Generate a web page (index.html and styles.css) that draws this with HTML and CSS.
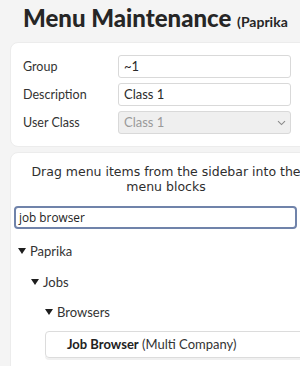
FILE: index.html
```html
<!DOCTYPE html>
<html>
<head>
<meta charset="utf-8">
<link rel="stylesheet" href="styles.css">
</head>
<body>
<div class="page">
  <h1 class="title">Menu Maintenance <span class="sub">(Paprika</span></h1>
  <div class="card form-card">
    <div class="row">
      <label class="lbl">Group</label>
      <div class="field">~1</div>
    </div>
    <div class="row">
      <label class="lbl">Description</label>
      <div class="field">Class 1</div>
    </div>
    <div class="row">
      <label class="lbl">User Class</label>
      <div class="field disabled">Class 1
        <svg class="chev" width="9" height="6" viewBox="0 0 9 6"><path d="M1 1.2 L4.5 4.6 L8 1.2" fill="none" stroke="#8a8a8a" stroke-width="1.1"/></svg>
      </div>
    </div>
  </div>
  <div class="card tree-card">
    <p class="hint">Drag menu items from the sidebar into the menu blocks</p>
    <div class="search">job browser</div>
    <ul class="tree">
      <li class="node lvl0"><span class="tri"></span>Paprika</li>
      <li class="node lvl1"><span class="tri"></span>Jobs</li>
      <li class="node lvl2"><span class="tri"></span>Browsers</li>
    </ul>
    <div class="item"><b>Job Browser</b> (Multi Company)</div>
  </div>
</div>
</body>
</html>
```
FILE: styles.css
```css
html, body {
  margin: 0;
  padding: 0;
  background: #f4f4f4;
  overflow: hidden;
}
.page {
  width: 300px;
  height: 366px;
  overflow: hidden;
  font-family: Lato, "Open Sans", sans-serif;
  color: #2a2a2a;
}
.title {
  margin: 0;
  padding: 3px 0 0 23px;
  height: 39px;
  box-sizing: border-box;
  font-family: Lato, sans-serif;
  font-weight: 900;
  font-size: 24px;
  line-height: 30px;
  color: #262626;
  white-space: nowrap;
}
.sub {
  font-size: 14px;
  font-weight: 700;
}
.card {
  background: #fff;
  border-radius: 8px;
  margin-left: 10px;
  width: 312px;
  box-sizing: border-box;
  border: 1px solid #ececec;
}
.form-card {
  margin-top: 3px;
  padding: 12px 0 12px 12px;
  display: flex;
  flex-direction: column;
  gap: 5px;
}
.row {
  display: grid;
  grid-template-columns: 95px 173px;
  align-items: center;
}
.lbl {
  font-size: 12.5px;
  color: #333;
}
.field {
  height: 23px;
  box-sizing: border-box;
  border: 1px solid #d9d9d9;
  border-radius: 3px;
  padding: 0 5px;
  font-size: 13px;
  line-height: 21px;
  color: #2a2a2a;
  position: relative;
}
.field.disabled {
  background: #efefef;
  color: #9a9a9a;
}
.chev {
  position: absolute;
  right: 4px;
  top: 8px;
}
.tree-card {
  margin-top: 5px;
  padding: 11px 0 0 3px;
  height: 230px;
}
.hint {
  margin: 0;
  text-align: center;
  font-family: "DejaVu Sans", sans-serif;
  font-size: 12.5px;
  line-height: 15px;
  color: #2e2e2e;
  padding-right: 3px;
}
.search {
  margin-top: 12px;
  width: 283px;
  height: 23px;
  box-sizing: border-box;
  border: 2px solid #7083aa;
  border-radius: 4px;
  padding: 0 3px;
  font-family: "Open Sans", sans-serif;
  font-size: 11.8px;
  line-height: 19px;
  color: #222;
}
.tree {
  list-style: none;
  margin: 0;
  padding: 0;
}
.node {
  height: 30.5px;
  display: flex;
  align-items: center;
  font-size: 13px;
  color: #333;
}
.node:first-child {
  margin-top: 7px;
}
.lvl0 { padding-left: 4px; }
.lvl1 { padding-left: 17px; }
.lvl2 { padding-left: 31px; }
.tri {
  width: 0;
  height: 0;
  border-left: 4px solid transparent;
  border-right: 4px solid transparent;
  border-top: 6px solid #1e1e1e;
  margin-right: 4px;
}
.item {
  margin-left: 31px;
  margin-top: 3px;
  width: 300px;
  height: 27px;
  box-sizing: border-box;
  border: 1px solid #dcdcdc;
  border-radius: 4px;
  padding-left: 21px;
  font-size: 13px;
  line-height: 25px;
  color: #333;
  box-shadow: 0 2px 0 #f0f0f0;
}
.item b {
  color: #222;
}
```
